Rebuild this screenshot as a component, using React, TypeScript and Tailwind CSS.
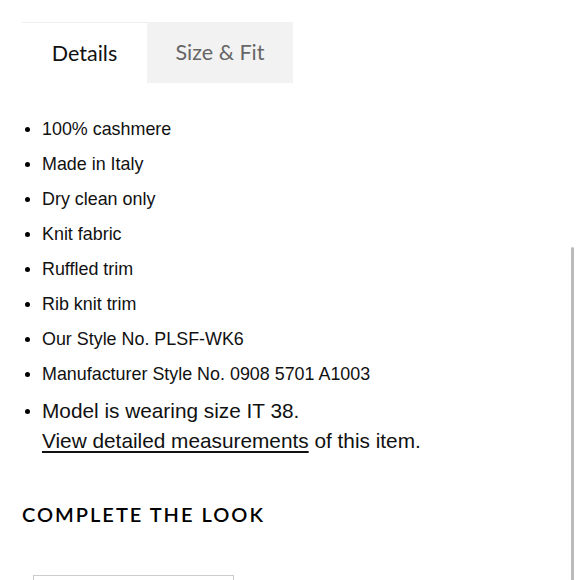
const details = [
  "100% cashmere",
  "Made in Italy",
  "Dry clean only",
  "Knit fabric",
  "Ruffled trim",
  "Rib knit trim",
  "Our Style No. PLSF-WK6",
  "Manufacturer Style No. 0908 5701 A1003",
];

export default function App() {
  return (
    <div className="relative h-[580px] w-[580px] overflow-hidden bg-white text-black">
      <div className="ml-[22px] mt-[22px] flex font-['Lato',sans-serif] text-[21.5px]">
        <div className="flex h-[61px] w-[125px] items-center justify-center border-t border-[#eeeeee] text-[#111]">
          Details
        </div>
        <div className="flex h-[61px] w-[146px] items-center justify-center bg-[#f2f2f2] text-[#666]">
          Size &amp; Fit
        </div>
      </div>

      <ul className="mt-[29px] font-['Liberation_Sans',Arial,sans-serif]">
        {details.map((d) => (
          <li key={d} className="flex h-[35px] items-center text-[17.9px] text-[#111]">
            <span className="ml-[25px] mr-[12px] h-[5px] w-[5px] rounded-full bg-black" />
            {d}
          </li>
        ))}
        <li className="mt-[4px] flex text-[20.8px] leading-[30px] text-[#111]">
          <span className="ml-[25px] mr-[12px] mt-[13px] h-[5px] w-[5px] shrink-0 rounded-full bg-black" />
          <div>
            Model is wearing size IT 38.
            <br />
            <a className="underline underline-offset-[3px]">View detailed measurements</a> of this
            item.
          </div>
        </li>
      </ul>

      <h2 className="ml-[22px] mt-[46px] font-['Lato',sans-serif] text-[20px] font-semibold leading-[24px] tracking-[2px] text-black">
        COMPLETE THE LOOK
      </h2>

      <div className="ml-[33px] mt-[49px] h-[40px] w-[201px] border border-[#cccccc]" />

      <div className="absolute right-[6px] top-[247px] h-[340px] w-[3px] rounded-full bg-[#bbbbbb]" />
    </div>
  );
}
